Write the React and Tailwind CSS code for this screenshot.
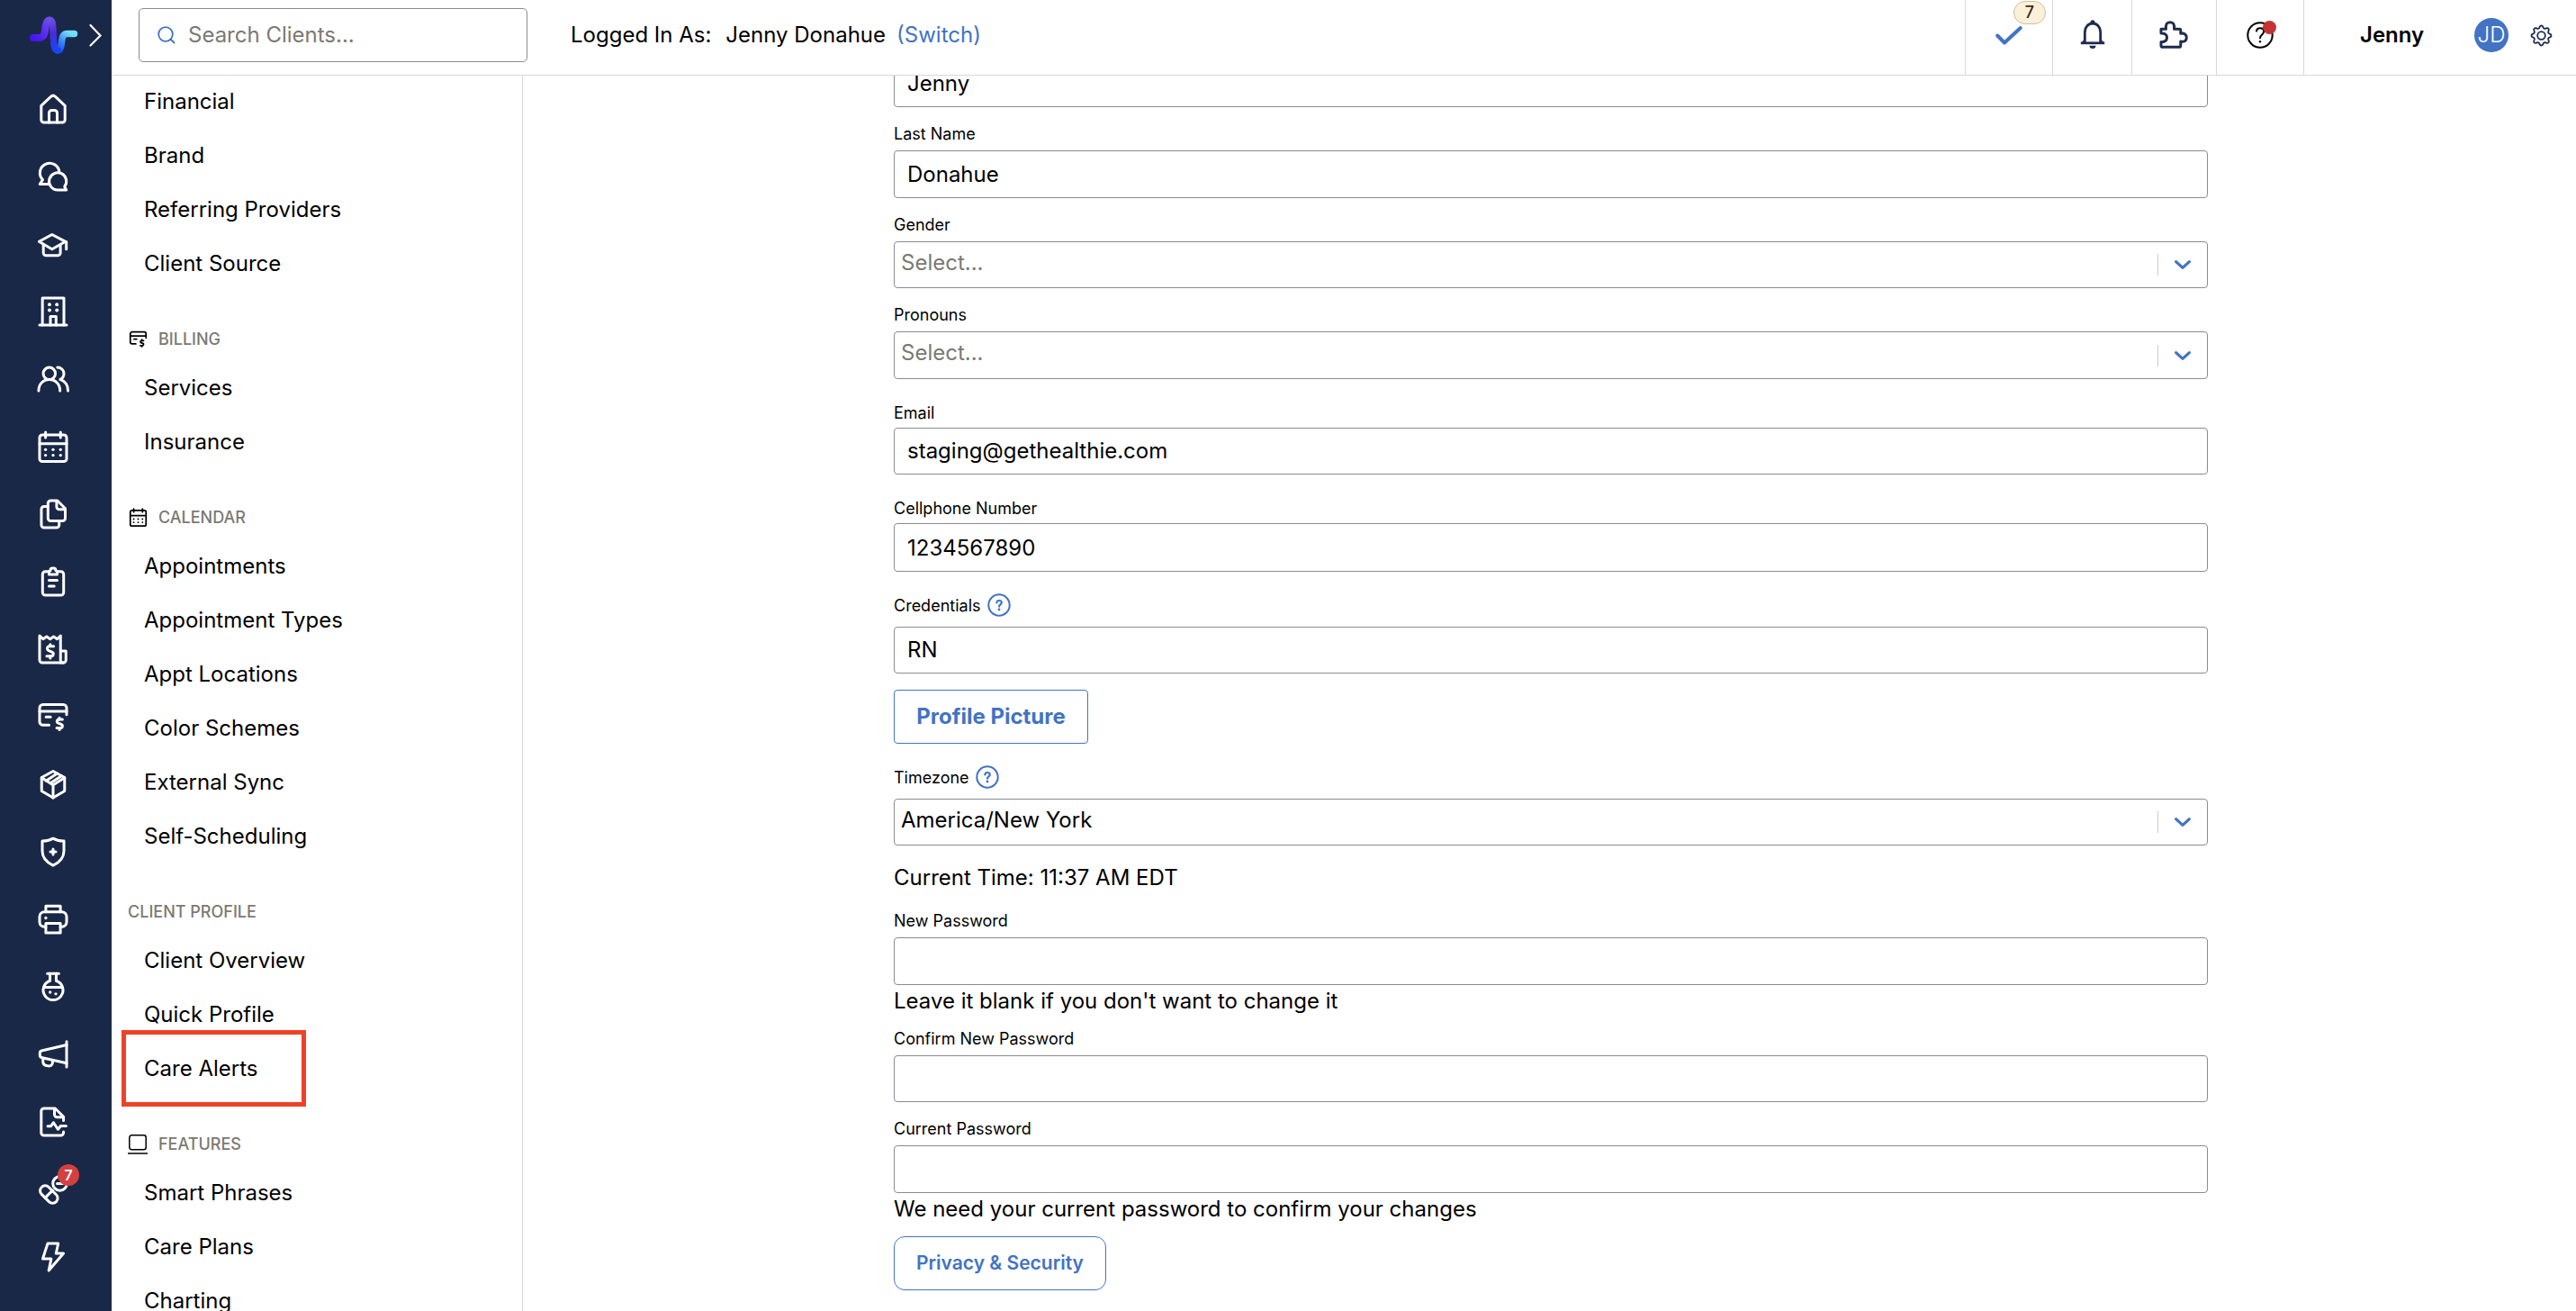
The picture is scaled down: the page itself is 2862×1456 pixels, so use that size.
const navIcons = [
  {
    name: 'home',
    paths: ['M3.2 9.6 10.5 2.8a2.2 2.2 0 0 1 3 0l7.3 6.8V20a2 2 0 0 1-2 2H5.2a2 2 0 0 1-2-2z', 'M9 22v-7a2 2 0 0 1 2-2h2a2 2 0 0 1 2 2v7'],
  },
  {
    name: 'chat',
    paths: ['M16.6 8.6A7.2 7.2 0 1 0 4.3 14.4L2.2 17.7h6', 'M15.4 22a6.4 6.4 0 1 1 5.1-2.5l1.3 2.5z'],
  },
  {
    name: 'education',
    paths: ['M11.2 5 1.6 10.2l9.6 5.6 10-5.6z', 'M21.8 10.4v5.4', 'M4.8 12.5v6a2 2 0 0 0 2 2h8.6a2 2 0 0 0 2-2v-6'],
  },
  {
    name: 'building',
    paths: ['M4.1 22V2H20v20', 'M2 22h20', 'M10 22v-6.4h4.2V22'],
    dots: [[9.3, 6.8], [14.8, 6.8], [9.3, 11], [14.8, 11]],
    dotSize: 1.3,
  },
  {
    name: 'clients',
    paths: [
      'M9.2 12.4a4.5 4.5 0 1 0 0-9 4.5 4.5 0 0 0 0 9z',
      'M1.3 20.6c0-4.8 3.3-8.2 7.9-8.2s7.9 3.4 7.9 8.2',
      'M15.2 3.3c2.7 0 4.8 2 4.8 4.7 0 1.9-1 3.4-2.7 4.3 3.3 1.2 5.7 4 5.7 8.3',
    ],
  },
  {
    name: 'calendar',
    paths: ['M4 3.3h16a2 2 0 0 1 2 2V21a2 2 0 0 1-2 2H4a2 2 0 0 1-2-2V5.3a2 2 0 0 1 2-2z', 'M2 9.9h20', 'M6.4 1.3v4', 'M17.5 1.3v4'],
    dots: [[6.4, 14.2], [12, 14.2], [17.5, 14.2], [6.4, 18.4], [12, 18.4], [17.5, 18.4]],
    dotSize: 1.1,
  },
  {
    name: 'documents',
    paths: [
      'M10.2 2h5L21 7.8V15a2 2 0 0 1-2 2h-8.8a2 2 0 0 1-2-2V4a2 2 0 0 1 2-2z',
      'M14.6 2.5v4a2 2 0 0 0 2 2H20.5',
      'M8 6.3H5.3a2 2 0 0 0-2 2V20a2 2 0 0 0 2 2h9.2a2 2 0 0 0 2-2v-2.5',
    ],
  },
  {
    name: 'clipboard',
    paths: [
      'M8.5 4.5H6.2a2 2 0 0 0-2 2V20a2 2 0 0 0 2 2h11.6a2 2 0 0 0 2-2V6.5a2 2 0 0 0-2-2h-2.3',
      'M9 6.7V5.2a1.5 1.5 0 0 1 1-1.4V3.5a1.5 1.5 0 0 1 1.5-1.5h1a1.5 1.5 0 0 1 1.5 1.5v.3a1.5 1.5 0 0 1 1 1.4v1.5z',
      'M9 11h6',
      'M9 15.3h3.8',
    ],
  },
  {
    name: 'receipt',
    paths: [
      'M17.5 22H4a2 2 0 0 1-2-2V2l2.6 2.5L7.2 2.7l2.6 1.8 2.6-1.8L15 4.5 17.5 2v18a2 2 0 0 0 4 0v-6.7h-4',
      'M19.5 22h-2',
      'M12.4 9.9H9a1.6 1.6 0 0 0-.5 3l2.6 1.2a1.6 1.6 0 0 1-.5 3.1H7.3',
      'M9.9 8.5v1.4',
      'M9.9 17.2v1.4',
    ],
  },
  {
    name: 'payments',
    paths: [
      'M9 18.2H4.5A2.5 2.5 0 0 1 2 15.7V5.5A2.5 2.5 0 0 1 4.5 3h15A2.5 2.5 0 0 1 22 5.5v5',
      'M2 8h20',
      'M6.8 12.2h3.2',
      'M18.9 14H16.2a1.4 1.4 0 0 0-.4 2.7l2.2.9a1.4 1.4 0 0 1-.4 2.7h-2.9',
      'M16.7 12.8V14',
      'M16.7 20.3v1.4',
    ],
  },
  {
    name: 'products',
    paths: ['M12 2.3 20.5 7v10L12 22 3.5 17V7z', 'M3.5 7.2 12 12.5l8.5-5.3', 'M12 12.5V22', 'M15 4 6.8 9.5', 'M18.2 5.8 10 11.2'],
  },
  {
    name: 'security',
    paths: ['M12 2.1c2.3 1.4 4.9 2 8 1.9v7.5c0 5-3.2 8.3-8 10.6-4.8-2.3-8-5.6-8-10.6V4c3.1.1 5.7-.5 8-1.9z', 'M12 10v4', 'M10 12h4'],
  },
  {
    name: 'fax',
    paths: [
      'M6.6 17.5H5.5A3.5 3.5 0 0 1 2 14V10a3.5 3.5 0 0 1 3.5-3.5h13A3.5 3.5 0 0 1 22 10v4a3.5 3.5 0 0 1-3.5 3.5h-1.1',
      'M6.6 6.5V2.2h10.8v4.3',
      'M6.6 15h10.8v7H6.6z',
    ],
    dots: [[6.6, 11]],
    dotSize: 1.1,
  },
  {
    name: 'labs',
    paths: ['M7.8 2.2h8.4', 'M9.7 2.2v5.3a7.3 7.3 0 1 0 4.6 0V2.2', 'M5.3 12.4h13.4'],
    dots: [[9.8, 16], [14, 17.2]],
    dotSize: 1.1,
  },
  {
    name: 'campaigns',
    paths: ['M22 2.5v18.8', 'M22 5 4 9.2a2 2 0 0 0-1.8 2v1.3A2 2 0 0 0 4 14.5l18 4', 'M4.5 14.8v2.5a3 3 0 0 0 2.5 3l1.6.3a2.5 2.5 0 0 0 3-2.4v-1.8'],
  },
  {
    name: 'records',
    paths: [
      'M19.7 11V8.2L13.5 2H5.2a2 2 0 0 0-2 2v16a2 2 0 0 0 2 2h12.5a2 2 0 0 0 2-2v-.7',
      'M13 2.5v4a2 2 0 0 0 2 2h4.2',
      'M8 15.2h2.3l2-2.7 3.3 5 2-2.5h4',
    ],
  },
  {
    name: 'medications',
    badge: 7,
    paths: [
      'M3.5 10.3a3.7 3.7 0 0 1 5.3 0l5.5 5.5a3.7 3.7 0 0 1-5.3 5.3L3.5 15.6a3.7 3.7 0 0 1 0-5.3z',
      'M6 18.2 11.6 12.8',
      'M17 12.8a5.2 5.2 0 1 0 0-10.4 5.2 5.2 0 0 0 0 10.4z',
      'M15 7.6h4.5',
    ],
  },
  { name: 'integrations', paths: ['M8 2h7.8l-1.6 7.3h5.5L8.8 22l1.8-8.6H4.3z'] },
];

const settingsGroups = [
  { items: ['Financial', 'Brand', 'Referring Providers', 'Client Source'] },
  { title: 'Billing', icon: 'payments', items: ['Services', 'Insurance'] },
  {
    title: 'Calendar',
    icon: 'calendar',
    items: ['Appointments', 'Appointment Types', 'Appt Locations', 'Color Schemes', 'External Sync', 'Self-Scheduling'],
  },
  { title: 'Client Profile', items: ['Client Overview', 'Quick Profile', 'Care Alerts'] },
  { title: 'Features', icon: 'laptop', items: ['Smart Phrases', 'Care Plans', 'Charting'] },
];

const StrokeIcon = ({ icon, className }) => (
  <svg
    viewBox="0 0 24 24"
    fill="none"
    stroke="currentColor"
    strokeWidth="2"
    strokeLinecap="round"
    strokeLinejoin="round"
    overflow="visible"
    className={className}
  >
    {icon.paths.map((d) => (
      <path key={d} d={d} />
    ))}
    {(icon.dots || []).map(([cx, cy]) => (
      <circle key={`${cx}-${cy}`} cx={cx} cy={cy} r={icon.dotSize} fill="currentColor" stroke="none" />
    ))}
  </svg>
);

const Logo = () => (
  <svg viewBox="0 0 56 42" className="h-[42px] w-14 shrink-0" fill="none" strokeLinecap="round" strokeLinejoin="round">
    <defs>
      <linearGradient id="logo-left" gradientUnits="userSpaceOnUse" x1="4" y1="24" x2="24" y2="4">
        <stop offset="0" stopColor="#4a12f5" />
        <stop offset="1" stopColor="#6a4fe6" />
      </linearGradient>
      <linearGradient id="logo-mid" gradientUnits="userSpaceOnUse" x1="24" y1="4" x2="31" y2="38">
        <stop offset="0" stopColor="#6a4fe6" />
        <stop offset="0.45" stopColor="#4a2ad8" />
        <stop offset="1" stopColor="#1747f5" />
      </linearGradient>
      <linearGradient id="logo-right" gradientUnits="userSpaceOnUse" x1="32" y1="38" x2="46" y2="19">
        <stop offset="0" stopColor="#1747f5" />
        <stop offset="0.5" stopColor="#3d8df8" />
        <stop offset="1" stopColor="#72dffb" />
      </linearGradient>
    </defs>
    <path stroke="url(#logo-right)" strokeWidth="7.5" d="M32 38c3 0 4-3 4.5-9 .5-7 2-9.5 6-9.5h8" />
    <path stroke="url(#logo-left)" strokeWidth="8" d="M5 24h5c5 0 7-1 8-8 .8-7 1.5-11 5-11.5" />
    <path stroke="url(#logo-mid)" strokeWidth="7.5" d="M23 4.5c3.5 0 3.5 4 4 12 .5 11 .5 21.500 5 21.500" />
  </svg>
);

const NavRail = () => (
  <nav className="flex h-full w-[124px] shrink-0 flex-col bg-[#1a2847] text-white">
    <div className="flex h-[103px] items-start pt-[18px] pl-8">
      <Logo />
      <svg viewBox="0 0 14 26" className="mt-2 ml-[11px] h-[26px] w-3.5" fill="none" stroke="currentColor" strokeWidth="2.2" strokeLinecap="round">
        <path d="M1.5 2 12.5 13.5 1.5 24.5" />
      </svg>
    </div>
    <div className="flex flex-col items-center gap-[39px] pr-1.5">
      {navIcons.map((icon) => (
        <div key={icon.name} className="relative h-9 w-9">
          <StrokeIcon icon={icon} className="h-9 w-9" />
          {icon.badge && (
            <span className="absolute -top-[10px] left-[23px] flex h-6 w-6 items-center justify-center rounded-full bg-[#d3403f] text-base font-semibold">
              {icon.badge}
            </span>
          )}
        </div>
      ))}
    </div>
  </nav>
);

const GroupIcon = ({ name }) => {
  if (name === 'laptop') {
    return (
      <svg viewBox="0 0 22 24" className="h-6 w-[22px]" fill="none" stroke="currentColor" strokeWidth="1.5">
        <rect x="1.8" y="1.8" width="18.4" height="16" rx="2.5" />
        <path d="M0 22h22" />
      </svg>
    );
  }
  return <StrokeIcon icon={navIcons.find((icon) => icon.name === name)} className="ml-px h-[21px] w-[21px]" />;
};

const SettingsSidebar = () => (
  <aside className="h-full w-[457px] shrink-0 overflow-hidden border-r border-[#d8d8da]">
    <div className="-mt-px">
      {settingsGroups.map((group) => (
        <section key={group.items[0]}>
          {group.title && (
            <h2 className="flex h-[78px] items-center gap-3 pt-[29px] pl-[18px] text-lg leading-[27px] font-medium text-[#7a7a72] uppercase">
              {group.icon && (
                <span className="text-black">
                  <GroupIcon name={group.icon} />
                </span>
              )}
              {group.title}
            </h2>
          )}
          {group.items.map((item) => (
            <div key={item} className="relative flex h-[60px] items-center pl-9 text-2xl">
              {item}
              {/* Callout around the highlighted entry */}
              {item === 'Care Alerts' && (
                <span className="absolute -top-[13px] left-[11px] h-[85px] w-[205px] border-5 border-[#ee4228]" />
              )}
            </div>
          ))}
        </section>
      ))}
    </div>
  </aside>
);

// Eight rounded teeth around the hub
const gearPoints = Array.from({ length: 96 }, (_, i) => {
  const angle = (i / 96) * Math.PI * 2;
  const wave = Math.cos(angle * 8);
  const r = 9.7 + 1.3 * Math.sign(wave) * Math.abs(wave) ** 0.7;
  return `${(12.5 + r * Math.cos(angle)).toFixed(2)},${(12.5 + r * Math.sin(angle)).toFixed(2)}`;
}).join(' ');

const Header = () => (
  <header className="flex h-[84px] shrink-0 items-stretch border-b border-[#d8d8da] text-2xl">
    <div className="mt-[9px] ml-[30px] flex h-[60px] w-[432px] items-center rounded-[5px] border border-[#8a8a94] pl-5 text-[#7a7a72]">
      <svg viewBox="0 0 20 20" className="h-5 w-5 text-[#4273c4]" fill="none" stroke="currentColor" strokeWidth="1.8" strokeLinecap="round">
        <circle cx="9" cy="9" r="7.8" />
        <path d="m14.5 14.5 4 4" />
      </svg>
      <span className="ml-3.5">Search Clients...</span>
    </div>
    <div className="flex items-center pb-[5px] pl-12">
      <span>Logged In As:</span>
      <span className="ml-4">Jenny Donahue</span>
      <span className="ml-3 text-[#4273c4]">(Switch)</span>
    </div>

    {/* Actions */}
    <div className="ml-auto flex text-[#1f2c4f]">
      <div className="relative w-[97px] border-l border-[#d8d8da]">
        <svg viewBox="0 0 32 24" className="mt-[27px] ml-8 h-6 w-8" fill="none" stroke="#4273c4" strokeWidth="4" strokeLinecap="round" strokeLinejoin="round">
          <path d="M3.2 12.5 11 20.5 28.8 4" />
        </svg>
        <span className="absolute top-px left-[53px] flex h-[26px] w-9 items-center justify-center rounded-[13px] border border-[#cbbf9f] bg-[#fcf0d9] text-lg font-medium text-[#3d2c10]">
          7
        </span>
      </div>
      <div className="flex w-[88px] justify-center border-l border-[#d8d8da] pt-[22px]">
        <svg viewBox="0 0 28 32" className="h-8 w-7" fill="none" stroke="currentColor" strokeWidth="2.8">
          <path d="M5.3 25V13.5a8.7 9.5 0 0 1 17.4 0V25" />
          <path d="M.8 25.8h26.4" />
          <path d="M10.5 28.8h7a3.5 3.2 0 0 1-7 0z" fill="currentColor" stroke="none" />
          <path d="M2.5 25.5c2-1 2.8-3 2.8-6M25.5 25.5c-2-1-2.8-3-2.8-6" strokeWidth="2" />
          <circle cx="14" cy="2.8" r="2.5" fill="currentColor" stroke="none" />
        </svg>
      </div>
      <div className="flex w-[94px] justify-center border-l border-[#d8d8da] pt-[22px] pr-0.5">
        <svg viewBox="0 0 32 32" className="h-8 w-8" fill="none" stroke="currentColor" strokeWidth="3" strokeLinejoin="round">
          <path d="M2 10.200h5.500C6.800 5.200 8.500 2.700 12 2.700s5.200 2.500 4.500 7.500h5.800a1.500 1.500 0 0 1 1.500 1.500v3.600c4-.8 6.500.9 6.500 4.400s-2.500 5-6.500 4.400v4.700a1.500 1.500 0 0 1-1.500 1.500H3.500A1.500 1.500 0 0 1 2 28.800v-4.200c4 .3 6.500-1.500 6.500-4.900S6 14.700 2 15z" />
        </svg>
      </div>
      <div className="relative flex w-[97px] justify-center border-l border-[#d8d8da] pt-6 text-black">
        <svg viewBox="0 0 30 30" className="h-[30px] w-[30px]" fill="none" stroke="currentColor" strokeWidth="2" strokeLinecap="round">
          <circle cx="15" cy="15" r="13.7" />
          <path d="M11 10.500c.3-2 1.800-3.200 4-3.200 2.500 0 4.200 1.500 4.200 3.700 0 3.500-4.200 3.500-4.200 7.300" />
          <circle cx="15" cy="22.3" r="1.2" fill="currentColor" stroke="none" />
        </svg>
        <span className="absolute top-[23px] left-[51px] h-[15px] w-[15px] rounded-full bg-[#c43332]" />
      </div>
      <div className="flex w-[303px] items-center border-l border-[#d8d8da] pb-[5px] pl-[62px] text-black">
        <span className="font-semibold">Jenny</span>
        <span className="mr-6 ml-auto flex h-[38px] w-[38px] items-center justify-center rounded-full bg-[#4273c4] font-light text-white">
          JD
        </span>
        <svg viewBox="0 0 25 25" className="mr-[26px] h-[25px] w-[25px] text-[#1f2c4f]" fill="none" stroke="currentColor" strokeWidth="1.8" strokeLinejoin="round">
          <polygon points={gearPoints} />
          <circle cx="12.5" cy="12.5" r="4.3" />
        </svg>
      </div>
    </div>
  </header>
);

const HelpIcon = () => (
  <svg viewBox="0 0 26 26" className="-mt-0.5 h-[26px] w-[26px]" fill="none" stroke="#4273c4" strokeWidth="2" strokeLinecap="round">
    <circle cx="13" cy="13" r="11.7" />
    <path d="M10.3 10.400c.2-1.600 1.200-2.400 2.700-2.400 1.700 0 2.800 1 2.800 2.300 0 2-2.600 2-2.800 4.300" strokeWidth="2.2" />
    <circle cx="13" cy="18" r="1.4" fill="#4273c4" stroke="none" />
  </svg>
);

const Label = ({ children, help, className }) => (
  <div className={`flex h-[27px] items-center gap-[7px] text-lg leading-[27px] ${className}`}>
    {children}
    {help && <HelpIcon />}
  </div>
);

const Input = ({ value, className }) => (
  <div className={`flex shrink-0 items-center rounded-[4px] border border-[#8a8a94] pl-3.5 text-2xl ${className}`}>{value}</div>
);

const Select = ({ value, className }) => (
  <div className={`flex shrink-0 items-center rounded-[4px] border border-[#8a8a94] pl-[7px] text-2xl ${className}`}>
    <span className="pb-[5px]">{value}</span>
    <span className="ml-auto h-6 w-px bg-[#cccccc]" />
    <svg viewBox="0 0 20 12" className="mr-[17px] ml-[17px] h-3 w-5" fill="none" stroke="#4273c4" strokeWidth="3.2" strokeLinecap="round" strokeLinejoin="round">
      <path d="m2.600 2.600 7.400 6.800 7.400-6.800" />
    </svg>
  </div>
);

const ProfileForm = () => (
  <main className="flex-1 overflow-hidden pl-[412px]">
    <div className="-mt-[18px] flex w-[1460px] flex-col">
      <Input value="Jenny" className="h-[53px]" />

      <Label className="mt-4 mb-[5px]">Last Name</Label>
      <Input value="Donahue" className="h-[53px]" />

      <Label className="mt-4 mb-[5px]">Gender</Label>
      <Select value="Select..." className="h-[52px] text-[#7a7a72]" />

      <Label className="mt-4 mb-[5px]">Pronouns</Label>
      <Select value="Select..." className="h-[53px] text-[#7a7a72]" />

      <Label className="mt-6 mb-[3px]">Email</Label>
      <Input value="staging@gethealthie.com" className="h-[52px]" />

      <Label className="mt-6 mb-[3px]">Cellphone Number</Label>
      <Input value="1234567890" className="h-[54px] pt-0.5" />

      <Label help className="mt-6 mb-[10px]">Credentials</Label>
      <Input value="RN" className="h-[52px]" />

      <button className="mt-[18px] h-[60px] w-[216px] rounded-[4px] border border-[#4273c4] text-2xl font-bold text-[#4273c4]">
        Profile Picture
      </button>

      <Label help className="mt-6 mb-[10px]">Timezone</Label>
      <Select value="America/New York" className="h-[52px]" />
      <p className="mt-[18px] text-2xl leading-9">Current Time: 11:37 AM EDT</p>

      <Label className="mt-4 mb-[5px]">New Password</Label>
      <Input className="h-[53px]" />
      <p className="text-2xl leading-9">Leave it blank if you don't want to change it</p>

      <Label className="mt-[10px] mb-[5px]">Confirm New Password</Label>
      <Input className="h-[52px]" />

      <Label className="mt-4 mb-[5px]">Current Password</Label>
      <Input className="h-[53px]" />
      <p className="text-2xl leading-9">We need your current password to confirm your changes</p>

      <button className="mt-3 h-[60px] w-[236px] rounded-xl border border-[#4273c4] text-[21px] font-semibold text-[#4273c4]">
        Privacy & Security
      </button>
    </div>
  </main>
);

const App = () => (
  <div className="flex h-[1456px] w-[2862px] overflow-hidden bg-white font-['Inter',sans-serif] text-black">
    <NavRail />
    <div className="flex min-w-0 flex-1 flex-col">
      <Header />
      <div className="flex min-h-0 flex-1">
        <SettingsSidebar />
        <ProfileForm />
      </div>
    </div>
  </div>
);

export default App;
